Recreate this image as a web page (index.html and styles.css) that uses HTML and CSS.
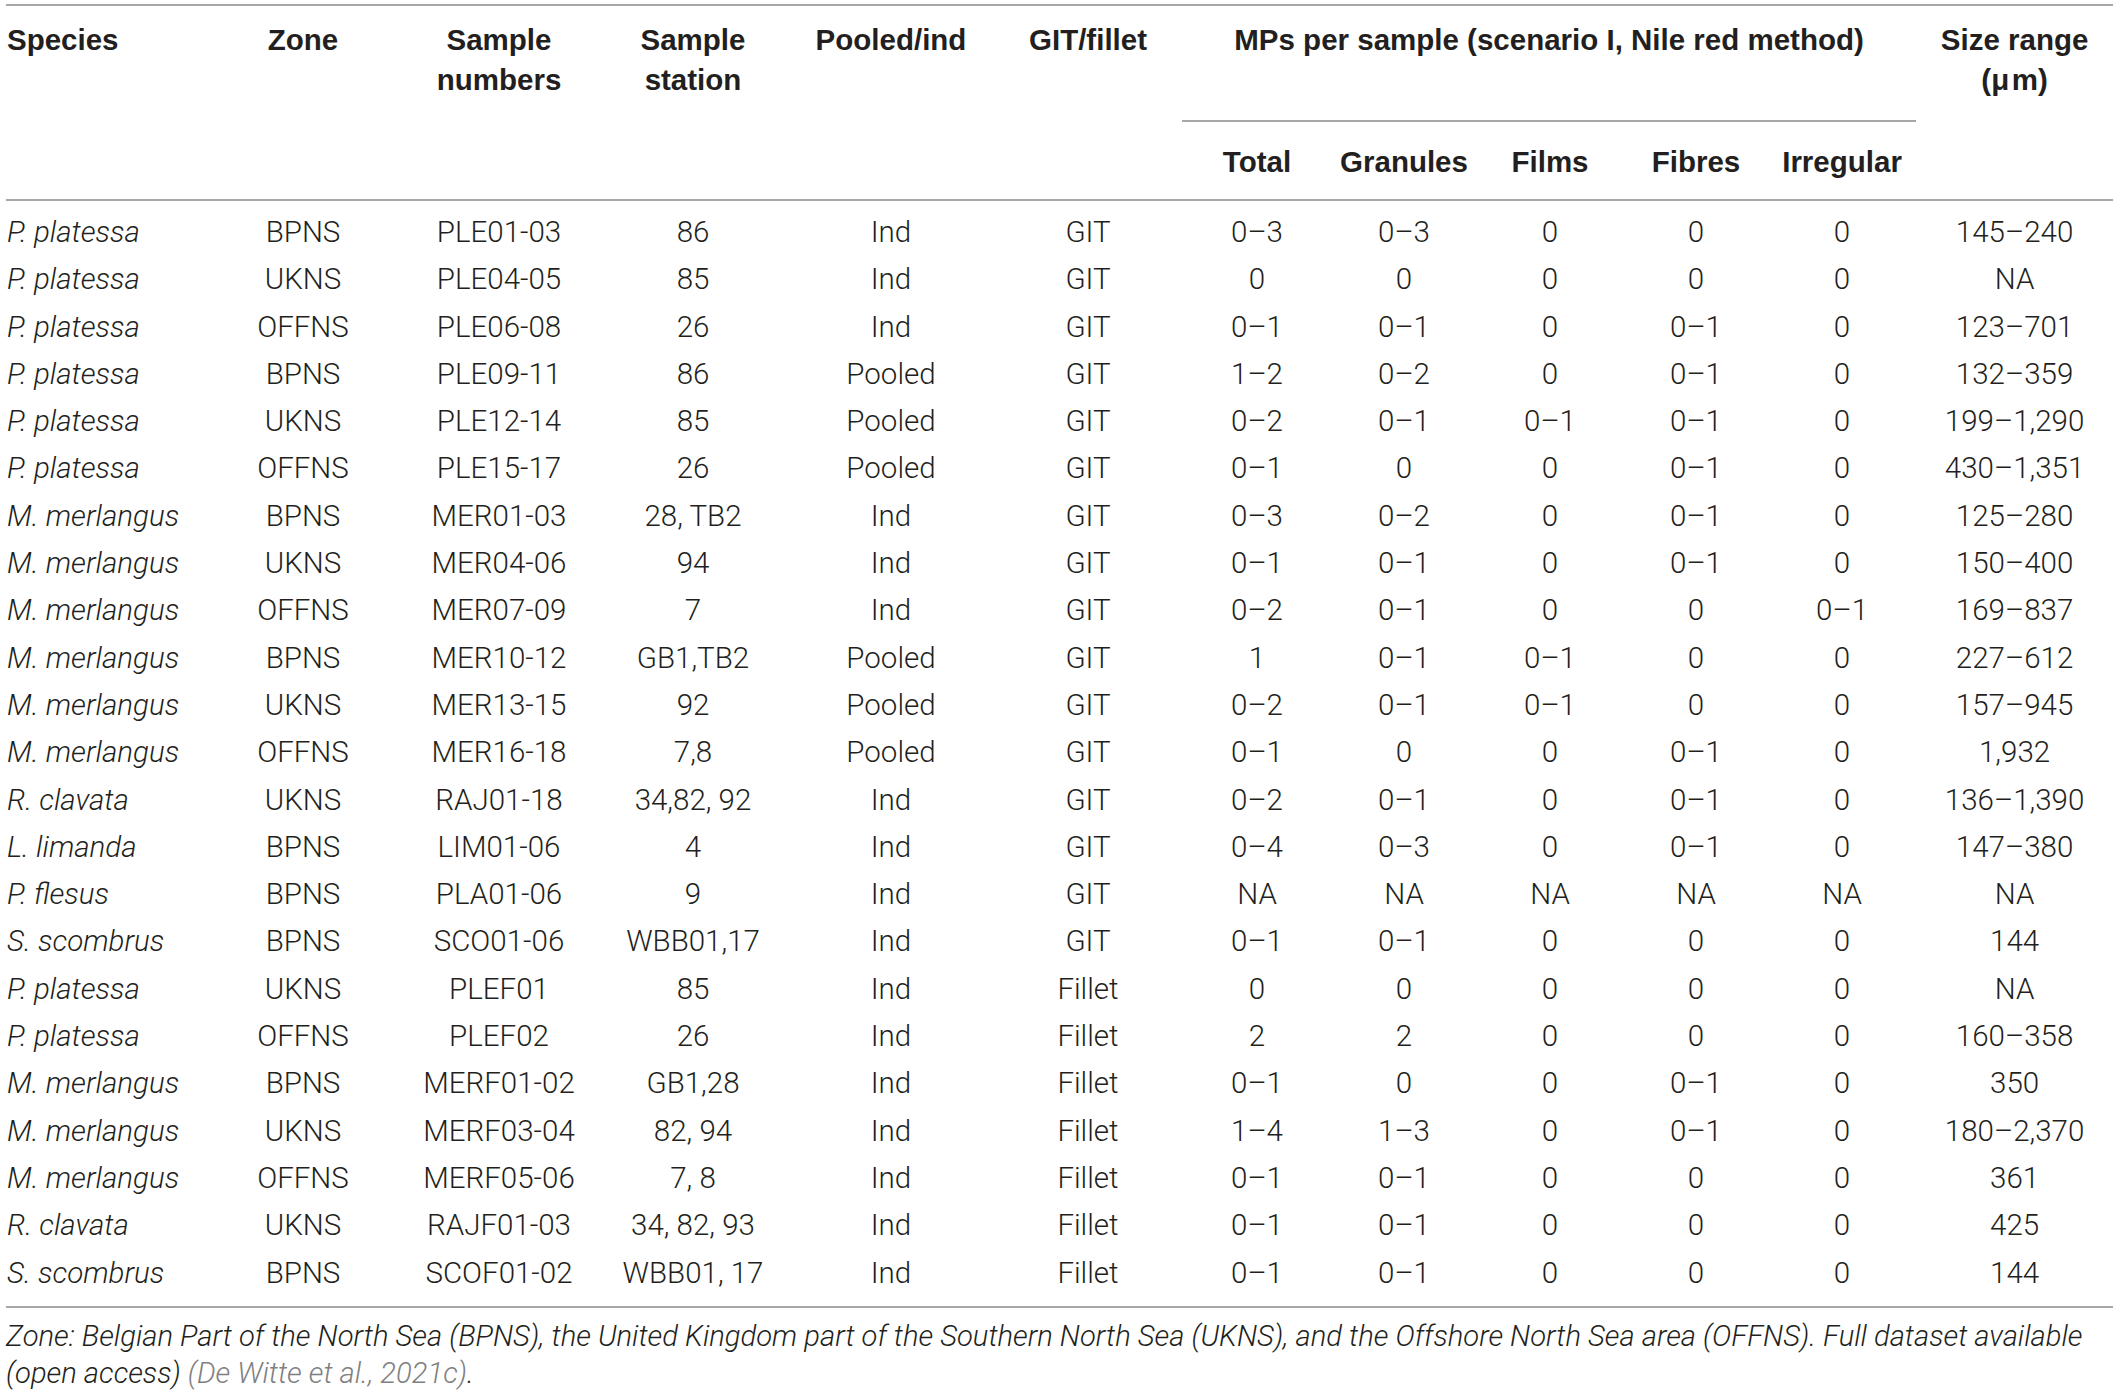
FILE: index.html
```html
<!doctype html>
<html>
<head>
<link rel="stylesheet" href="styles.css">
</head>
<body>
<div class="wrap">
<table class="data">
  <colgroup>
    <col class="c-species"><col class="c-zone"><col class="c-num"><col class="c-station">
    <col class="c-pooled"><col class="c-git"><col class="c-total"><col class="c-gran">
    <col class="c-films"><col class="c-fibres"><col class="c-irr"><col class="c-size">
  </colgroup>
  <thead>
    <tr class="head-top">
      <th rowspan="2" class="left">Species</th>
      <th rowspan="2">Zone</th>
      <th rowspan="2">Sample<br>numbers</th>
      <th rowspan="2">Sample<br>station</th>
      <th rowspan="2">Pooled/ind</th>
      <th rowspan="2">GIT/fillet</th>
      <th colspan="5" class="group">MPs per sample (scenario I, Nile red method)</th>
      <th rowspan="2">Size range<br>(&mu;&#8202;m)</th>
    </tr>
    <tr class="head-sub">
      <th>Total</th>
      <th>Granules</th>
      <th>Films</th>
      <th>Fibres</th>
      <th>Irregular</th>
    </tr>
  </thead>
  <tbody>
    <tr><td class="sp">P. platessa</td><td>BPNS</td><td>PLE01-03</td><td>86</td><td>Ind</td><td>GIT</td><td>0–3</td><td>0–3</td><td>0</td><td>0</td><td>0</td><td>145–240</td></tr>
    <tr><td class="sp">P. platessa</td><td>UKNS</td><td>PLE04-05</td><td>85</td><td>Ind</td><td>GIT</td><td>0</td><td>0</td><td>0</td><td>0</td><td>0</td><td>NA</td></tr>
    <tr><td class="sp">P. platessa</td><td>OFFNS</td><td>PLE06-08</td><td>26</td><td>Ind</td><td>GIT</td><td>0–1</td><td>0–1</td><td>0</td><td>0–1</td><td>0</td><td>123–701</td></tr>
    <tr><td class="sp">P. platessa</td><td>BPNS</td><td>PLE09-11</td><td>86</td><td>Pooled</td><td>GIT</td><td>1–2</td><td>0–2</td><td>0</td><td>0–1</td><td>0</td><td>132–359</td></tr>
    <tr><td class="sp">P. platessa</td><td>UKNS</td><td>PLE12-14</td><td>85</td><td>Pooled</td><td>GIT</td><td>0–2</td><td>0–1</td><td>0–1</td><td>0–1</td><td>0</td><td>199–1,290</td></tr>
    <tr><td class="sp">P. platessa</td><td>OFFNS</td><td>PLE15-17</td><td>26</td><td>Pooled</td><td>GIT</td><td>0–1</td><td>0</td><td>0</td><td>0–1</td><td>0</td><td>430–1,351</td></tr>
    <tr><td class="sp">M. merlangus</td><td>BPNS</td><td>MER01-03</td><td>28, TB2</td><td>Ind</td><td>GIT</td><td>0–3</td><td>0–2</td><td>0</td><td>0–1</td><td>0</td><td>125–280</td></tr>
    <tr><td class="sp">M. merlangus</td><td>UKNS</td><td>MER04-06</td><td>94</td><td>Ind</td><td>GIT</td><td>0–1</td><td>0–1</td><td>0</td><td>0–1</td><td>0</td><td>150–400</td></tr>
    <tr><td class="sp">M. merlangus</td><td>OFFNS</td><td>MER07-09</td><td>7</td><td>Ind</td><td>GIT</td><td>0–2</td><td>0–1</td><td>0</td><td>0</td><td>0–1</td><td>169–837</td></tr>
    <tr><td class="sp">M. merlangus</td><td>BPNS</td><td>MER10-12</td><td>GB1,TB2</td><td>Pooled</td><td>GIT</td><td>1</td><td>0–1</td><td>0–1</td><td>0</td><td>0</td><td>227–612</td></tr>
    <tr><td class="sp">M. merlangus</td><td>UKNS</td><td>MER13-15</td><td>92</td><td>Pooled</td><td>GIT</td><td>0–2</td><td>0–1</td><td>0–1</td><td>0</td><td>0</td><td>157–945</td></tr>
    <tr><td class="sp">M. merlangus</td><td>OFFNS</td><td>MER16-18</td><td>7,8</td><td>Pooled</td><td>GIT</td><td>0–1</td><td>0</td><td>0</td><td>0–1</td><td>0</td><td>1,932</td></tr>
    <tr><td class="sp">R. clavata</td><td>UKNS</td><td>RAJ01-18</td><td>34,82, 92</td><td>Ind</td><td>GIT</td><td>0–2</td><td>0–1</td><td>0</td><td>0–1</td><td>0</td><td>136–1,390</td></tr>
    <tr><td class="sp">L. limanda</td><td>BPNS</td><td>LIM01-06</td><td>4</td><td>Ind</td><td>GIT</td><td>0–4</td><td>0–3</td><td>0</td><td>0–1</td><td>0</td><td>147–380</td></tr>
    <tr><td class="sp">P. flesus</td><td>BPNS</td><td>PLA01-06</td><td>9</td><td>Ind</td><td>GIT</td><td>NA</td><td>NA</td><td>NA</td><td>NA</td><td>NA</td><td>NA</td></tr>
    <tr><td class="sp">S. scombrus</td><td>BPNS</td><td>SCO01-06</td><td>WBB01,17</td><td>Ind</td><td>GIT</td><td>0–1</td><td>0–1</td><td>0</td><td>0</td><td>0</td><td>144</td></tr>
    <tr><td class="sp">P. platessa</td><td>UKNS</td><td>PLEF01</td><td>85</td><td>Ind</td><td>Fillet</td><td>0</td><td>0</td><td>0</td><td>0</td><td>0</td><td>NA</td></tr>
    <tr><td class="sp">P. platessa</td><td>OFFNS</td><td>PLEF02</td><td>26</td><td>Ind</td><td>Fillet</td><td>2</td><td>2</td><td>0</td><td>0</td><td>0</td><td>160–358</td></tr>
    <tr><td class="sp">M. merlangus</td><td>BPNS</td><td>MERF01-02</td><td>GB1,28</td><td>Ind</td><td>Fillet</td><td>0–1</td><td>0</td><td>0</td><td>0–1</td><td>0</td><td>350</td></tr>
    <tr><td class="sp">M. merlangus</td><td>UKNS</td><td>MERF03-04</td><td>82, 94</td><td>Ind</td><td>Fillet</td><td>1–4</td><td>1–3</td><td>0</td><td>0–1</td><td>0</td><td>180–2,370</td></tr>
    <tr><td class="sp">M. merlangus</td><td>OFFNS</td><td>MERF05-06</td><td>7, 8</td><td>Ind</td><td>Fillet</td><td>0–1</td><td>0–1</td><td>0</td><td>0</td><td>0</td><td>361</td></tr>
    <tr><td class="sp">R. clavata</td><td>UKNS</td><td>RAJF01-03</td><td>34, 82, 93</td><td>Ind</td><td>Fillet</td><td>0–1</td><td>0–1</td><td>0</td><td>0</td><td>0</td><td>425</td></tr>
    <tr><td class="sp">S. scombrus</td><td>BPNS</td><td>SCOF01-02</td><td>WBB01, 17</td><td>Ind</td><td>Fillet</td><td>0–1</td><td>0–1</td><td>0</td><td>0</td><td>0</td><td>144</td></tr>
  </tbody>
</table>

<p class="note">Zone: Belgian Part of the North Sea (BPNS), the United Kingdom part of the Southern North Sea (UKNS), and the Offshore North Sea area (OFFNS). Full dataset available (open access) <span class="cite">(De Witte et al., 2021c)</span>.</p>
</div>
</body>
</html>
```

FILE: styles.css
```css
html { background: #fff; }
body { margin: 0; color: #231f20; font-family: "Liberation Sans", Arial, sans-serif; }

.wrap { padding: 4px 6px 0 6px; }

.data { width: 2107px; table-layout: fixed; border-collapse: collapse; border-top: 2px solid #a7a7a7; border-bottom: 2px solid #a7a7a7; }

.c-species { width: 200px; }
.c-zone { width: 194px; }
.c-num { width: 198px; }
.c-station { width: 190px; }
.c-pooled { width: 206px; }
.c-git { width: 188px; }
.c-total { width: 150px; }
.c-gran { width: 144px; }
.c-films { width: 148px; }
.c-fibres { width: 144px; }
.c-irr { width: 148px; }
.c-size { width: 197px; }

th { font-weight: bold; font-size: 29.5px; line-height: 40px; text-align: center; vertical-align: top; padding: 0; }
th.left { text-align: left; padding-left: 1px; }
thead { border-bottom: 2px solid #a7a7a7; }
.head-top { height: 116px; }
.head-top th { padding-top: 14px; }
.head-top th.group { border-bottom: 2px solid #a7a7a7; }
.head-sub { height: 77px; }
.head-sub th { padding-top: 20px; padding-bottom: 17px; }

td { font-family: Roboto, "Liberation Sans", sans-serif; font-weight: 300; font-size: 29.5px; line-height: 47.3px; padding: 0; text-align: center; white-space: nowrap; }
td.sp { text-align: left; font-style: italic; padding-left: 1px; }
tbody tr:first-child td { padding-top: 8px; }
tbody tr:last-child td { padding-bottom: 9px; }

.note { margin: 10px 0 0 0; font-family: Roboto, "Liberation Sans", sans-serif; font-weight: 300; font-style: italic; font-size: 29.2px; line-height: 37px; }
.cite { color: #808080; }
```
